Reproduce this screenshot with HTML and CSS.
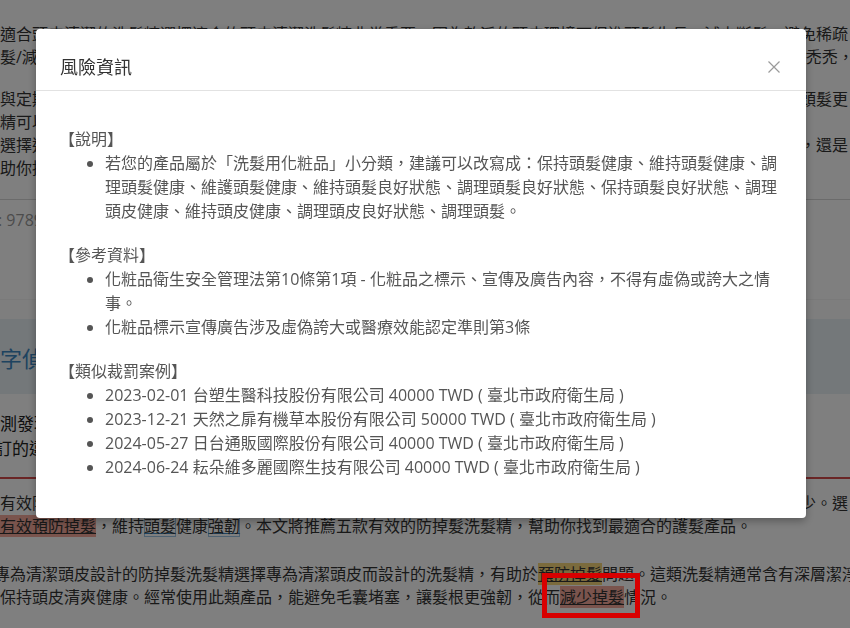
FILE: index.html
```html
<!DOCTYPE html>
<html lang="zh-Hant">
<head>
    <meta charset="UTF-8">
    <meta name="viewport" content="width=device-width, initial-scale=1.0">
    <title>風險資訊</title>
    <link rel="stylesheet" href="styles.css">
</head>
<body>
    <div class="page">
        <div class="article">
            <p class="para">適合頭皮清潔的洗髮精選擇適合的頭皮清潔洗髮精非常重要，因為乾淨的頭皮環境可促進頭髮生長、減少斷髮、避免稀疏<br>髮/減少掉髮的困擾。若長期使用不適合的洗髮精，可能導致頭皮出油、毛囊阻塞與髮根脆弱，久而久之頭頂會變得禿禿，</p>
            <p class="para">與定期護理頭皮的習慣搭配使用，更能充分發揮防掉髮的效果。選擇含有天然植物萃取成分的洗髮精，可以讓你的頭髮更<br>精可以溫和潔淨頭皮，同時補充頭皮所需養分。<br>選擇適合自己髮質的洗髮精非常的重要，不論你是屬於油性頭皮、乾性頭皮、敏感性頭皮、容易產生頭皮屑的頭皮，還是<br>助你挑選出最適合的產品。</p>
        </div>
        <div class="meta">: 9789865502741</div>
        <div class="band"></div>
        <div class="section-head">
            <h2>字偵測結果</h2>
        </div>
        <div class="result">
            <div class="result-line">測發現以下可能違規的用詞</div>
            <div class="result-line shift">訂的違規字詞請參考下方說明</div>
        </div>
        <div class="check-text">
            <p>有效防掉髮洗髮精是許多人護髮的重要選擇，能夠深層清潔頭皮、平衡油脂分泌並強化髮根，讓頭髮斷裂與掉落減少。選<br><span class="mark-red">有效預防掉髮</span>，維持<span class="mark-blue">頭髮</span>健康<span class="mark-blue">強韌</span>。本文將推薦五款有效的防掉髮洗髮精，幫助你找到最適合的護髮產品。</p>
            <p class="indent">專為清潔頭皮設計的防掉髮洗髮精選擇專為清潔頭皮而設計的洗髮精，有助於<span class="mark-yellow">預防掉髮</span>問題。這類洗髮精通常含有深層潔淨<br>保持頭皮清爽健康。經常使用此類產品，能避免毛囊堵塞，讓髮根更強韌，從而<span class="mark-red">減少掉髮</span>情況。</p>
        </div>
    </div>

    <div class="backdrop"></div>

    <div class="modal">
        <div class="modal-header">
            <h3 class="modal-title">風險資訊</h3>
            <button class="close" type="button" aria-label="Close">
                <svg width="12" height="12" viewBox="0 0 12 12">
                    <path d="M0.5 0.5 L11.5 11.5 M11.5 0.5 L0.5 11.5" stroke="#9a9a9a" stroke-width="1.2" fill="none"/>
                </svg>
            </button>
        </div>
        <div class="modal-body">
            <div class="info-block">
                <div class="info-title">【說明】</div>
                <ul>
                    <li>若您的產品屬於「洗髮用化粧品」小分類，建議可以改寫成：保持頭髮健康、維持頭髮健康、調理頭髮健康、維護頭髮健康、維持頭髮良好狀態、調理頭髮良好狀態、保持頭髮良好狀態、調理頭皮健康、維持頭皮健康、調理頭皮良好狀態、調理頭髮。</li>
                </ul>
            </div>
            <div class="info-block">
                <div class="info-title">【參考資料】</div>
                <ul>
                    <li>化粧品衛生安全管理法第10條第1項 - 化粧品之標示、宣傳及廣告內容，不得有虛偽或誇大之情事。</li>
                    <li>化粧品標示宣傳廣告涉及虛偽誇大或醫療效能認定準則第3條</li>
                </ul>
            </div>
            <div class="info-block">
                <div class="info-title">【類似裁罰案例】</div>
                <ul>
                    <li>2023-02-01 台塑生醫科技股份有限公司 40000 TWD ( 臺北市政府衛生局 )</li>
                    <li>2023-12-21 天然之扉有機草本股份有限公司 50000 TWD ( 臺北市政府衛生局 )</li>
                    <li>2024-05-27 日台通販國際股份有限公司 40000 TWD ( 臺北市政府衛生局 )</li>
                    <li>2024-06-24 耘朵維多麗國際生技有限公司 40000 TWD ( 臺北市政府衛生局 )</li>
                </ul>
            </div>
        </div>
    </div>

    <div class="focus-box"></div>
</body>
</html>
```

FILE: styles.css
```css
body {
    margin: 0;
    background: #fff;
    color: #333;
    font-family: "Open Sans", "Noto Sans CJK TC", sans-serif;
    overflow: hidden;
    height: 628px;
}
.page {
    width: 900px;
    padding-top: 23px;
}
.para {
    margin: 0 0 19px;
    font-size: 16px;
    line-height: 23px;
    white-space: nowrap;
}
.meta {
    border-top: 1px solid #d6d6d6;
    padding: 9px 0 67px;
    margin-left: -2px;
    font-size: 16px;
    line-height: 23px;
    color: #999;
}
.band {
    height: 19px;
    border-top: 1px solid #f4f4f4;
    background: #fcfcfc;
}
.section-head {
    background: #e8f0f5;
    height: 75px;
    display: flex;
    align-items: center;
}
.section-head h2 {
    margin: 0;
    font-size: 22px;
    font-weight: normal;
    color: #3d86c0;
    white-space: nowrap;
}
.result {
    padding: 17px 0 16px;
    border-bottom: 2px solid #d44a4a;
    font-size: 17px;
    line-height: 25px;
    color: #222;
    white-space: nowrap;
}
.shift {
    margin-left: -5px;
}
.check-text {
    padding-top: 13px;
}
.check-text p {
    margin: 0 0 25px;
    font-size: 16px;
    line-height: 23px;
    white-space: nowrap;
}
.check-text .indent {
    text-indent: -6px;
}
.mark-red {
    background: #f4a89a;
    text-decoration: underline;
}
.mark-yellow {
    background: #f7d77a;
    text-decoration: underline;
}
.mark-blue {
    box-shadow: inset 0 0 0 1px #9cc4e4;
    text-decoration: underline;
    text-decoration-color: #3d86c0;
}

.backdrop {
    position: fixed;
    top: 0;
    left: 0;
    right: 0;
    bottom: 0;
    background: rgba(0, 0, 0, 0.5);
}
.modal {
    position: fixed;
    top: 29px;
    left: 36px;
    width: 770px;
    height: 489px;
    background: #fff;
    border-radius: 4px;
    box-shadow: 0 3px 9px rgba(0, 0, 0, 0.3);
    overflow: hidden;
}
.modal-header {
    display: flex;
    align-items: center;
    justify-content: space-between;
    padding: 25px 26px 10px 24px;
    border-bottom: 1px solid #e2e2e2;
}
.modal-title {
    margin: 0;
    font-size: 18px;
    line-height: 26px;
    font-weight: normal;
    color: #333;
}
.close {
    border: none;
    background: none;
    padding: 0;
    width: 12px;
    height: 12px;
    display: flex;
    cursor: pointer;
}
.modal-body {
    padding: 36px 24px 0;
    font-size: 16px;
    line-height: 24px;
    color: #555;
}
.info-block + .info-block {
    margin-top: 20px;
}
.info-title {
    margin-left: -1px;
}
.modal-body ul {
    margin: 0;
    padding-left: 45px;
}

.focus-box {
    position: absolute;
    left: 542px;
    top: 573px;
    width: 88px;
    height: 35px;
    border: 5px solid #d80000;
}
```
